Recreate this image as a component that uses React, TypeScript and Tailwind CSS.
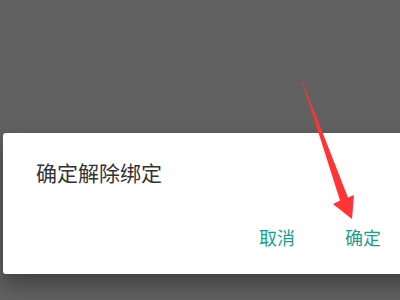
export default function App() {
  return (
    <div
      className="relative h-[300px] w-[400px] overflow-hidden bg-[#616161]"
      style={{ fontFamily: '"Noto Sans CJK SC", "Noto Sans", sans-serif' }}
    >
      <div className="pt-[133px] pl-[3px]">
        <div className="flex h-[141px] w-[420px] flex-col rounded-[3px] bg-white shadow-[0_10px_20px_rgba(0,0,0,0.35)]">
          <div className="pl-[33px] pt-[27px] text-[21px] leading-[24px] text-[#333333]">确定解除绑定</div>
          <div className="mt-auto mb-[26px] flex w-[400px] justify-end gap-[50px] pr-[22px] text-[18px] leading-[22px] text-[#1b9e8d]">
            <span>取消</span>
            <span>确定</span>
          </div>
        </div>
      </div>

      {/* red annotation arrow */}
      <svg className="absolute left-0 top-0" width="400" height="300" viewBox="0 0 400 300">
        <polygon
          points="300.5,76 348,197.5 354,195 352,219 333,204 340,200.5"
          fill="#ff3434"
        />
      </svg>
    </div>
  );
}
